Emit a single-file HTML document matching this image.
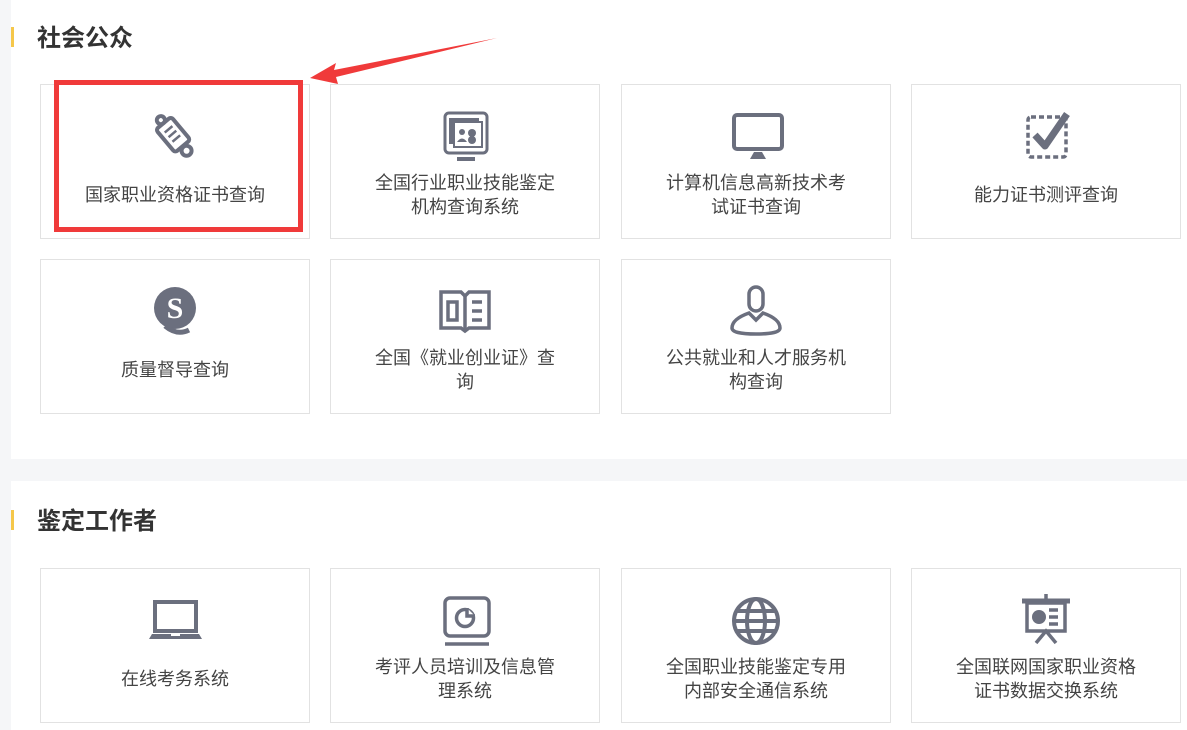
<!DOCTYPE html>
<html><head><meta charset="utf-8"><style>
*{margin:0;padding:0;box-sizing:border-box}
body{width:1187px;height:730px;overflow:hidden;background:#f5f6f8;font-family:"Liberation Sans","Noto Sans CJK SC",sans-serif;position:relative}
.panel{position:absolute;left:11px;background:#fff;width:1176px}
.title{position:absolute;left:37px;font-size:24px;font-weight:bold;color:#333;line-height:30px}
.bar{position:absolute;left:11px;width:3px;height:20px;background:#f5c74a}
.card{position:absolute;width:270px;height:155px;border:1px solid #e2e2e2;background:#fff}
.card svg{position:absolute;left:50%;top:24px;margin-left:-28px}
.card .t{position:absolute;left:0;right:0;top:74px;height:72px;display:flex;align-items:center;justify-content:center;text-align:center;font-size:18px;line-height:24px;color:#444;padding:0 40px}
</style></head><body>
<div class="panel" style="top:0;height:459px"></div>
<div class="panel" style="top:481px;height:249px"></div>
<div class="bar" style="top:27px"></div>
<div class="title" style="top:24px">社会公众</div>
<div class="bar" style="top:510px"></div>
<div class="title" style="top:507px">鉴定工作者</div>

<div class="card" style="left:40px;top:84px"><svg width="56" height="56" viewBox="0 0 56 56" fill="none" stroke="#6b6f7e" stroke-width="4" stroke-linejoin="round"><g transform="rotate(-40 28 28)"><rect x="18" y="10" width="20" height="30" rx="3"/><path d="M23 18h10M23 24h10M23 30h10" stroke-width="2.5"/><circle cx="28" cy="46" r="5"/><circle cx="28" cy="6" r="4"/></g></svg><div class="t">国家职业资格证书查询</div></div>
<div class="card" style="left:330px;top:84px"><svg width="56" height="56" viewBox="0 0 56 56" fill="none" stroke="#6b6f7e" stroke-width="3"><rect x="8" y="4" width="42" height="40" rx="4"/><rect x="12" y="9" width="30" height="26" fill="#6b6f7e" stroke="none"/><rect x="17" y="13" width="28" height="25" fill="#fff" stroke="#6b6f7e" stroke-width="2"/><circle cx="25" cy="23" r="3" fill="#6b6f7e" stroke="none"/><path d="M20 33q5-7 10 0z" fill="#6b6f7e" stroke="none"/><circle cx="35" cy="24" r="4" fill="#6b6f7e" stroke="none"/><circle cx="35" cy="31" r="4" fill="#6b6f7e" stroke="none"/><path d="M20 50h18" stroke-width="4"/></svg><div class="t">全国行业职业技能鉴定机构查询系统</div></div>
<div class="card" style="left:621px;top:84px"><svg width="56" height="56" viewBox="0 0 56 56" fill="none" stroke="#6b6f7e" stroke-width="4"><rect x="6" y="6" width="48" height="34" rx="3"/><path d="M22 50l4-7h8l4 7z" fill="#6b6f7e" stroke="none"/></svg><div class="t">计算机信息高新技术考试证书查询</div></div>
<div class="card" style="left:911px;top:84px"><svg width="56" height="56" viewBox="0 0 56 56" fill="none" stroke="#6b6f7e" stroke-width="3.5"><rect x="10" y="8" width="38" height="40" rx="3" stroke-dasharray="5 3"/><path d="M17 26l10 11 22-32" stroke-width="7" stroke-linejoin="round"/></svg><div class="t">能力证书测评查询</div></div>

<div class="card" style="left:40px;top:259px"><svg width="56" height="56" viewBox="0 0 56 56"><circle cx="28" cy="24" r="21" fill="#6b6f7e"/><path d="M18 42q12 10 24 4" stroke="#6b6f7e" stroke-width="5" fill="none"/><text x="28" y="34" font-size="30" font-weight="bold" fill="#fff" text-anchor="middle" font-family="Liberation Serif,serif">S</text></svg><div class="t">质量督导查询</div></div>
<div class="card" style="left:330px;top:259px"><svg width="56" height="56" viewBox="0 0 56 56" fill="none" stroke="#6b6f7e" stroke-width="3.5"><path d="M4 8h20l4 4 4-4h20v36H32l-4 3-4-3H4z"/><path d="M11 18h9v18h-9zM35 18h10M35 27h10M35 36h10M28 12v34"/></svg><div class="t">全国《就业创业证》查询</div></div>
<div class="card" style="left:621px;top:259px"><svg width="56" height="56" viewBox="0 0 56 56" fill="none" stroke="#6b6f7e" stroke-width="3.5"><rect x="21" y="3" width="14" height="24" rx="7"/><path d="M21 29q-17 6-17 15q0 6 24 6q24 0 24-6q0-9-17-15l-7 7z"/></svg><div class="t">公共就业和人才服务机构查询</div></div>

<div class="card" style="left:40px;top:568px"><svg width="56" height="56" viewBox="0 0 56 56" fill="none" stroke="#6b6f7e"><rect x="8" y="9" width="41" height="29" stroke-width="4"/><path d="M5 41h47l3 5H2z" fill="#6b6f7e" stroke="none"/><rect x="24" y="41" width="9" height="2" fill="#fff" stroke="none"/></svg><div class="t">在线考务系统</div></div>
<div class="card" style="left:330px;top:568px"><svg width="56" height="56" viewBox="0 0 56 56" fill="none" stroke="#6b6f7e" stroke-width="3.5"><rect x="8" y="5" width="44" height="38" rx="5"/><path d="M8 51h44" stroke-width="3.5"/><circle cx="28" cy="25" r="8.5"/><path d="M30 15v8h8" fill="#fff"/></svg><div class="t">考评人员培训及信息管理系统</div></div>
<div class="card" style="left:621px;top:568px"><svg width="56" height="56" viewBox="0 0 56 56" fill="none" stroke="#6b6f7e" stroke-width="4"><circle cx="28" cy="28" r="22"/><ellipse cx="28" cy="28" rx="9" ry="22"/><path d="M6 28h44M9 18h38M9 38h38"/></svg><div class="t">全国职业技能鉴定专用内部安全通信系统</div></div>
<div class="card" style="left:911px;top:568px"><svg width="56" height="56" viewBox="0 0 56 56" fill="none" stroke="#6b6f7e" stroke-width="3.5"><path d="M4 8h48" stroke-width="5"/><path d="M28 1v6"/><rect x="9" y="10" width="38" height="28"/><circle cx="21" cy="24" r="7" fill="#6b6f7e" stroke="none"/><path d="M31 17h9M31 24h9M31 31h9"/><path d="M18 50l10-12 10 12"/></svg><div class="t">全国联网国家职业资格证书数据交换系统</div></div>

<div style="position:absolute;left:54px;top:80px;width:249px;height:152px;border:5px solid #f03a3a"></div>
<svg style="position:absolute;left:0;top:0" width="1187" height="730"><path d="M497 38L334 70L336 63L310 78L338 84L336 77Z" fill="#f03a3a"/></svg>
</body></html>
